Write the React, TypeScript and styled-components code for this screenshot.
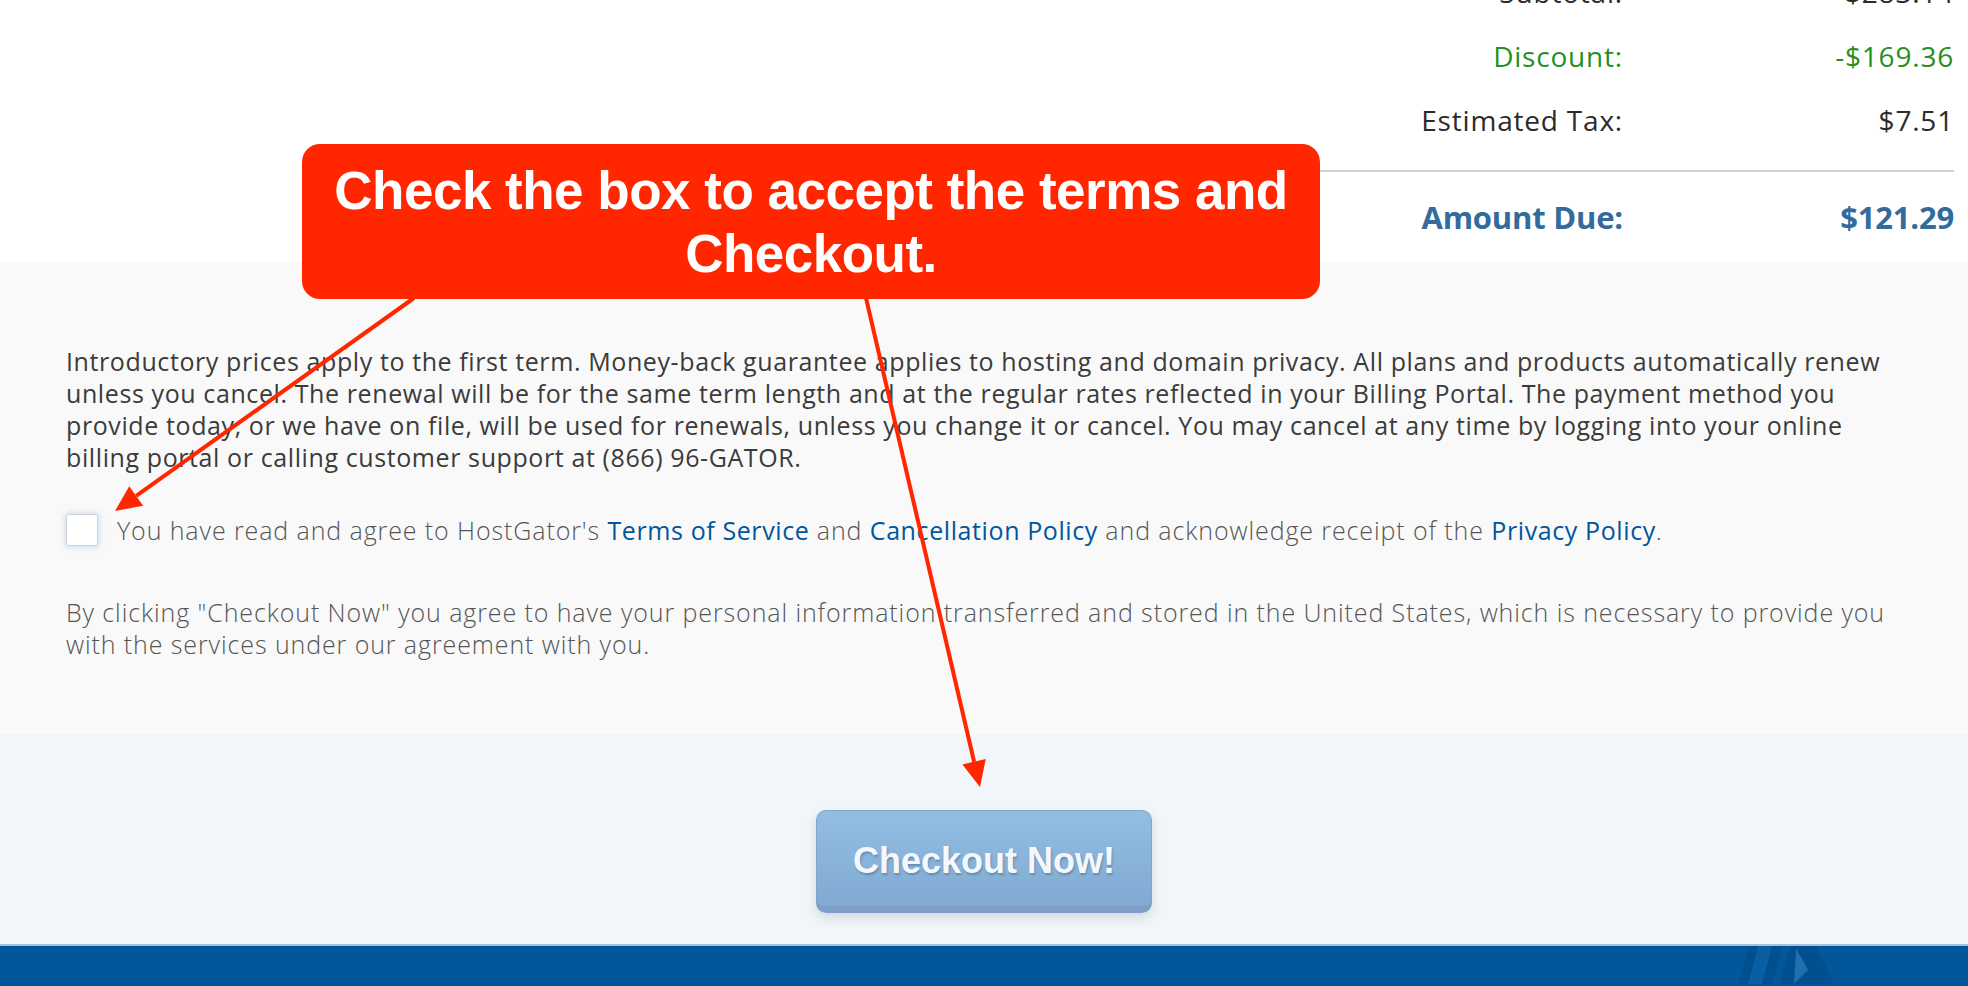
import styled, { createGlobalStyle } from "styled-components";

const GlobalStyle = createGlobalStyle`
  html, body {
    margin: 0;
    padding: 0;
    background: #ffffff;
  }
  body {
    font-family: "Open Sans", "Noto Sans", sans-serif;
    -webkit-font-smoothing: antialiased;
  }
`;

const Page = styled.div`
  position: relative;
  width: 100%;
  height: 986px;
  overflow: hidden;
  display: flex;
  flex-direction: column;
`;

const SummarySection = styled.section`
  background: #ffffff;
  height: 262px;
  display: flex;
  justify-content: flex-end;
`;

const Summary = styled.div`
  width: 984px;
  margin-top: -40px;
  padding-right: 14px;
`;

const Row = styled.div<{ $tone?: "green" }>`
  display: grid;
  grid-template-columns: 1fr 331px;
  align-items: center;
  height: 64px;
  font-size: 28px;
  letter-spacing: 0.8px;
  color: ${(p) => (p.$tone === "green" ? "#25901f" : "#2b2b2b")};
`;

const Cell = styled.span`
  text-align: right;
`;

const Divider = styled.hr`
  margin: 18px 0 0;
  border: 0;
  border-top: 2px solid #d2d2d2;
`;

const TotalRow = styled(Row)`
  height: 90px;
  font-size: 31px;
  font-weight: 700;
  color: #336b9c;
  letter-spacing: -0.2px;
`;

const TermsSection = styled.section`
  background: #f9f9f9;
  padding: 83px 66px 74px;
  color: #444444;
  font-size: 25px;
  line-height: 32px;
`;

const Intro = styled.p`
  margin: 0;
  font-weight: 500;
  letter-spacing: 0.6px;
  color: #3b3b3b;
`;

const AgreeRow = styled.label`
  display: flex;
  align-items: center;
  gap: 19px;
  margin-top: 41px;
  font-weight: 300;
  letter-spacing: 0.9px;
  color: #555555;
`;

const Box = styled.span`
  flex: none;
  width: 30px;
  height: 30px;
  background: #ffffff;
  border: 1px solid #d4d4d4;
  border-radius: 2px;
  box-shadow: 0 0 6px rgba(90, 160, 230, 0.45);
`;

const Link = styled.a`
  color: #00569c;
  font-weight: 500;
  letter-spacing: 0.6px;
  text-decoration: none;
`;

const Notice = styled.p`
  margin: 50px 0 0;
  font-weight: 300;
  letter-spacing: 0.9px;
  color: #555555;
`;

const CheckoutSection = styled.section`
  background: #f1f6fa;
  height: 212px;
  padding-top: 76px;
  box-sizing: border-box;
  display: flex;
  justify-content: center;
  align-items: flex-start;
  border-bottom: 2px solid #a6c1dc;
`;

const CheckoutButton = styled.button`
  width: 336px;
  height: 103px;
  border: 1px solid #7fa5cc;
  border-bottom: 7px solid #7f9fc7;
  border-radius: 10px;
  background: linear-gradient(#93bee3, #80aad1);
  box-shadow: 0 5px 12px rgba(0, 0, 0, 0.12);
  color: #f4f8fc;
  font-family: "Liberation Sans", Arial, sans-serif;
  font-weight: 700;
  font-size: 36px;
  text-shadow: 1px 2px 2px rgba(40, 70, 110, 0.35);
  padding: 4px 0 0;
  cursor: pointer;
`;

const Footer = styled.footer`
  flex: 1;
  background: #02569a;
  display: flex;
  justify-content: flex-end;
  padding-right: 118px;
`;

const Callout = styled.div`
  position: absolute;
  left: 302px;
  top: 144px;
  width: 1018px;
  height: 155px;
  box-sizing: border-box;
  padding-top: 15px;
  background: #ff2600;
  border-radius: 18px;
  color: #ffffff;
  font-family: "Liberation Sans", Arial, sans-serif;
  font-weight: 700;
  font-size: 53px;
  line-height: 63px;
  text-align: center;
  letter-spacing: -0.5px;
`;

const Arrows = styled.svg`
  position: absolute;
  inset: 0;
  pointer-events: none;
`;

function Arrow({ x1, y1, x2, y2 }: { x1: number; y1: number; x2: number; y2: number }) {
  const a = Math.atan2(y2 - y1, x2 - x1);
  const len = 26;
  const half = 12;
  const bx = x2 - Math.cos(a) * len;
  const by = y2 - Math.sin(a) * len;
  const px = -Math.sin(a) * half;
  const py = Math.cos(a) * half;
  return (
    <g>
      <line x1={x1} y1={y1} x2={bx} y2={by} stroke="#ff2600" strokeWidth={4} />
      <polygon
        points={`${x2},${y2} ${bx + px},${by + py} ${bx - px},${by - py}`}
        fill="#ff2600"
      />
    </g>
  );
}

const App = () => {
  return (
    <Page>
      <GlobalStyle />
      <SummarySection>
        <Summary>
          <Row>
            <Cell>Subtotal:</Cell>
            <Cell>$283.14</Cell>
          </Row>
          <Row $tone="green">
            <Cell>Discount:</Cell>
            <Cell>-$169.36</Cell>
          </Row>
          <Row>
            <Cell>Estimated Tax:</Cell>
            <Cell>$7.51</Cell>
          </Row>
          <Divider />
          <TotalRow>
            <Cell>Amount Due:</Cell>
            <Cell>$121.29</Cell>
          </TotalRow>
        </Summary>
      </SummarySection>

      <TermsSection>
        <Intro>
          Introductory prices apply to the first term. Money-back guarantee applies to hosting and
          domain privacy. All plans and products automatically renew unless you cancel. The renewal
          will be for the same term length and at the regular rates reflected in your Billing Portal.
          The payment method you provide today, or we have on file, will be used for renewals, unless
          you change it or cancel. You may cancel at any time by logging into your online billing
          portal or calling customer support at (866) 96-GATOR.
        </Intro>
        <AgreeRow>
          <Box />
          <span>
            You have read and agree to HostGator's <Link href="#">Terms of Service</Link> and{" "}
            <Link href="#">Cancellation Policy</Link> and acknowledge receipt of the{" "}
            <Link href="#">Privacy Policy</Link>.
          </span>
        </AgreeRow>
        <Notice>
          By clicking "Checkout Now" you agree to have your personal information transferred and
          stored in the United States, which is necessary to provide you with the services under our
          agreement with you.
        </Notice>
      </TermsSection>

      <CheckoutSection>
        <CheckoutButton>Checkout Now!</CheckoutButton>
      </CheckoutSection>

      <Footer>
        <svg width="120" height="38" viewBox="0 0 120 38">
          <polygon points="20,0 52,0 42,38 8,38" fill="#004f8e" />
          <polygon points="28,0 42,0 32,38 18,38" fill="#0a5ea2" />
          <polygon points="60,0 86,0 104,38 50,38" fill="#004f8e" />
          <polygon points="66,2 78,24 64,38" fill="#1f6eae" />
        </svg>
      </Footer>

      <Callout>
        Check the box to accept the terms and
        <br />
        Checkout.
      </Callout>

      <Arrows width="1968" height="986" viewBox="0 0 1968 986">
        <Arrow x1={414} y1={298} x2={115} y2={511} />
        <Arrow x1={866} y1={298} x2={980} y2={787} />
      </Arrows>
    </Page>
  );
};

export default App;
